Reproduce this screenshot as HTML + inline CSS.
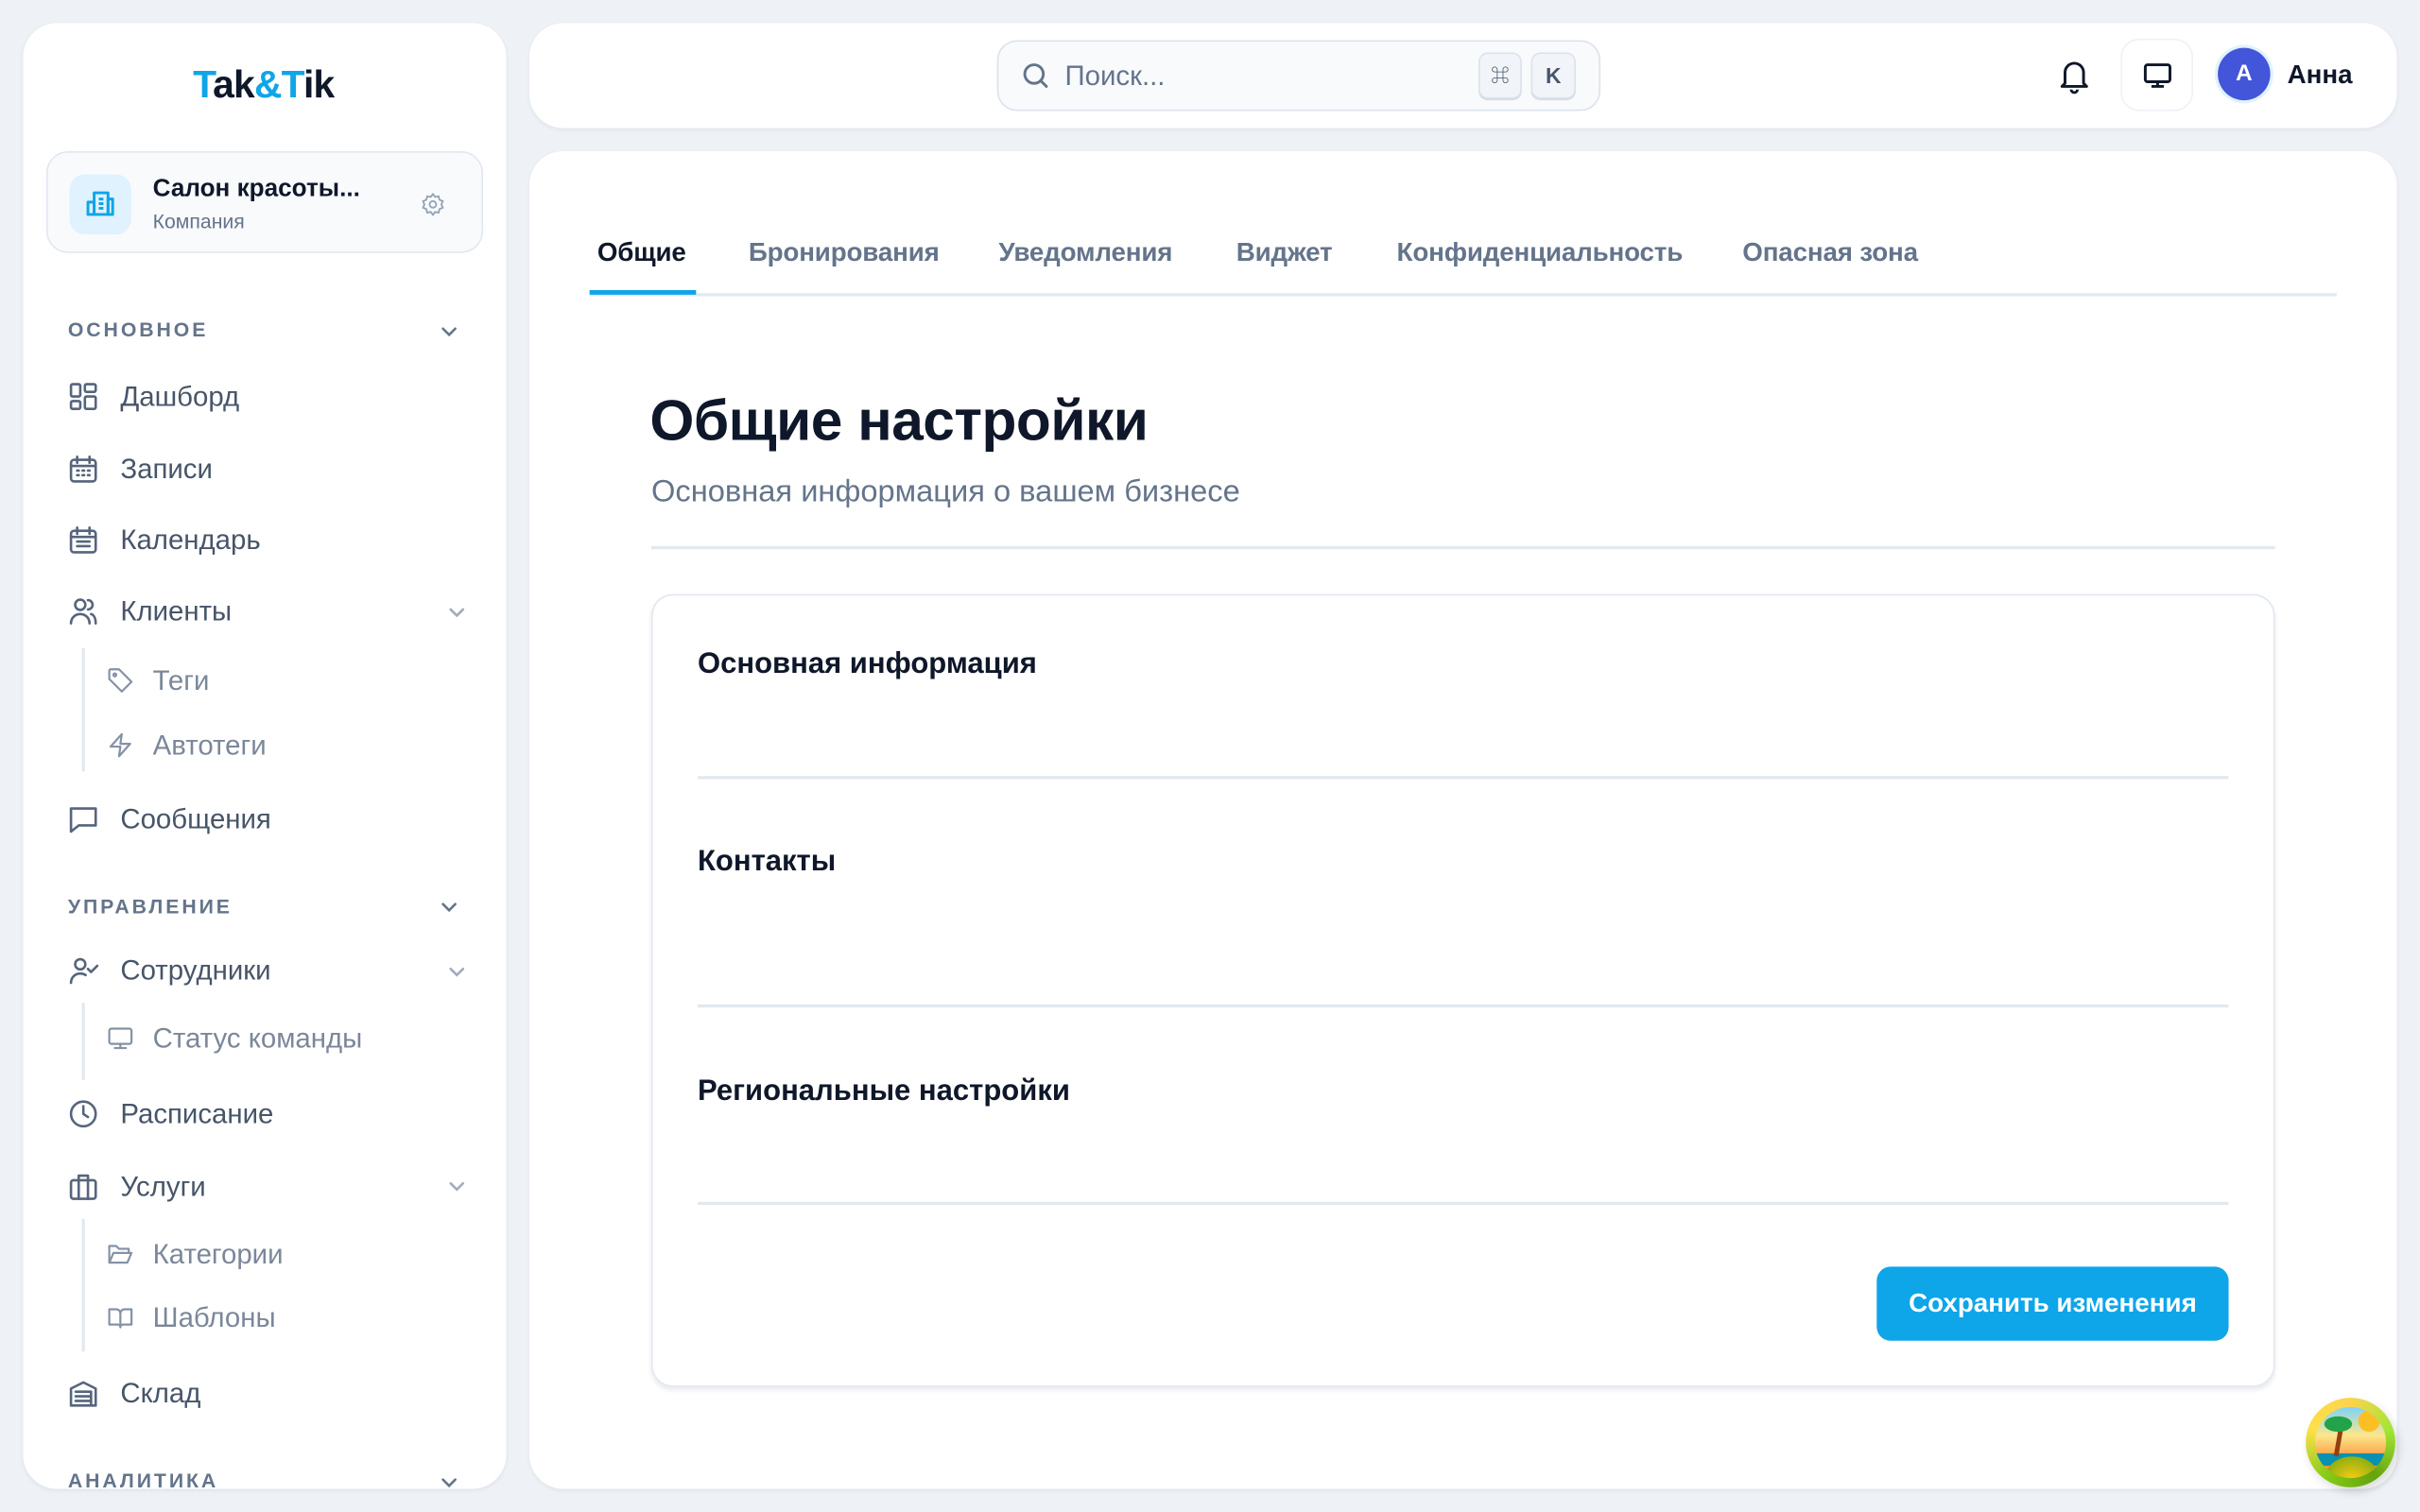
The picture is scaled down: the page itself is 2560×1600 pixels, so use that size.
<!DOCTYPE html>
<html><head><meta charset="utf-8">
<style>
*{box-sizing:border-box;margin:0;padding:0}
html,body{width:2560px;height:1600px;overflow:hidden;background:#eef2f7}
#w{position:absolute;left:0;top:0;width:1568px;height:980px;transform:scale(1.632653);transform-origin:0 0;font-family:"Liberation Sans","Noto Sans CJK SC",sans-serif;color:#0f172a}
.a{position:absolute;white-space:nowrap}
.panel{position:absolute;background:#fff;border-radius:22px;box-shadow:0 1px 3px rgba(15,23,42,.06)}
.sec{font-size:13px;font-weight:bold;letter-spacing:1.8px;color:#64748b;line-height:16px}
.it{font-size:18px;color:#475569;line-height:20px}
.sub{font-size:18px;color:#7b879a;line-height:20px}
.ic{position:absolute;width:20px;height:20px;fill:none;stroke:#56657c;stroke-width:1.6;stroke-linecap:round;stroke-linejoin:round}
.ics{position:absolute;width:18px;height:18px;fill:none;stroke:#8592a6;stroke-width:1.5;stroke-linecap:round;stroke-linejoin:round}
.chev{position:absolute;width:12px;height:12px;fill:none;stroke:#64748b;stroke-width:1.6;stroke-linecap:round}
.vl{position:absolute;left:53px;width:1.5px;background:#e2e8f0}
.tab{font-size:17px;color:#64748b;line-height:20px;font-weight:bold;letter-spacing:-.1px}
.h3{font-size:19px;font-weight:bold;line-height:22px;color:#0f172a}
.hl{position:absolute;left:452px;width:992px;height:1.5px;background:#e2e8f0}
</style></head><body><div id="w">

<div class="panel" style="left:15px;top:15px;width:313px;height:950px"></div>
<div class="a" style="left:125px;top:41px;font-size:25px;font-weight:bold;letter-spacing:-.5px;line-height:28px"><span style="color:#0ea5e9">T</span><span style="color:#0f172a">ak</span><span style="color:#0ea5e9">&amp;T</span><span style="color:#0f172a">ik</span></div>

<div class="a" style="left:30px;top:98px;width:283px;height:66px;border:1.5px solid #e2e8f0;background:#f8fafc;border-radius:14px"></div>
<div class="a" style="left:45px;top:113px;width:40px;height:39px;background:#e0f2fe;border-radius:10px"></div>
<svg class="a" style="left:55px;top:122px" width="20" height="20" viewBox="0 0 20 20" fill="none" stroke="#0ea5e9" stroke-width="1.8" stroke-linejoin="round"><rect x="6" y="3" width="9" height="14"/><rect x="2" y="9" width="4" height="8"/><rect x="15" y="7" width="3" height="10"/><path d="M9 7h3M9 10h3M9 13h3"/></svg>
<div class="a" style="left:99px;top:113px;font-size:16px;font-weight:bold;line-height:19px">Салон красоты...</div>
<div class="a" style="left:99px;top:136px;font-size:13px;color:#64748b;line-height:15px">Компания</div>
<svg class="a" style="left:272px;top:124px" width="17" height="17" viewBox="0 0 24 24" fill="none" stroke="#94a3b8" stroke-width="1.6"><circle cx="12" cy="12" r="3"/><path d="M12 2.5l2 2.6 3.2-.6.8 3.2 3 1.3-1.2 3 1.2 3-3 1.3-.8 3.2-3.2-.6-2 2.6-2-2.6-3.2.6-.8-3.2-3-1.3 1.2-3-1.2-3 3-1.3.8-3.2 3.2.6z"/></svg>

<div class="a sec" style="left:44px;top:206px">ОСНОВНОЕ</div>
<svg class="chev" style="left:285px;top:209px" viewBox="0 0 12 12"><path d="M2 4l4 4 4-4"/></svg>

<svg class="ic" style="left:44px;top:247px" viewBox="0 0 20 20"><rect x="2" y="2" width="6" height="8" rx="1"/><rect x="11" y="2" width="7" height="5" rx="1"/><rect x="2" y="13" width="6" height="5" rx="1"/><rect x="11" y="10" width="7" height="8" rx="1"/></svg>
<div class="a it" style="left:78px;top:247px">Дашборд</div>
<svg class="ic" style="left:44px;top:294px" viewBox="0 0 20 20"><rect x="2" y="4" width="16" height="14" rx="2"/><path d="M2 8h16M6 2v4M14 2v4M6 11h1M9.5 11h1M13 11h1M6 14h1M9.5 14h1M13 14h1"/></svg>
<div class="a it" style="left:78px;top:294px">Записи</div>
<svg class="ic" style="left:44px;top:340px" viewBox="0 0 20 20"><rect x="2" y="4" width="16" height="14" rx="2"/><path d="M2 8h16M6 2v4M14 2v4M6 11h8M6 14h8"/></svg>
<div class="a it" style="left:78px;top:340px">Календарь</div>
<svg class="ic" style="left:44px;top:386px" viewBox="0 0 20 20"><circle cx="8" cy="6" r="3.3"/><path d="M2 18c0-3.5 2.7-6 6-6s6 2.5 6 6M13 3a3 3 0 010 6M15 12c2 .6 3 3 3 6"/></svg>
<div class="a it" style="left:78px;top:386px">Клиенты</div>
<svg class="chev" style="left:290px;top:391px;stroke:#a0acbd" viewBox="0 0 12 12"><path d="M2 4l4 4 4-4"/></svg>
<div class="vl" style="top:420px;height:80px"></div>
<svg class="ics" style="left:69px;top:432px" viewBox="0 0 20 20"><path d="M2 9V3a1 1 0 011-1h6l9 9-7 7z"/><circle cx="6" cy="6" r="1"/></svg>
<div class="a sub" style="left:99px;top:431px">Теги</div>
<svg class="ics" style="left:69px;top:474px" viewBox="0 0 20 20"><path d="M11 2L3 11h7l-1 7 8-9h-7z"/></svg>
<div class="a sub" style="left:99px;top:473px">Автотеги</div>
<svg class="ic" style="left:44px;top:521px" viewBox="0 0 20 20"><path d="M2 3h16v11H7l-5 4z"/></svg>
<div class="a it" style="left:78px;top:521px">Сообщения</div>

<div class="a sec" style="left:44px;top:580px">УПРАВЛЕНИЕ</div>
<svg class="chev" style="left:285px;top:582px" viewBox="0 0 12 12"><path d="M2 4l4 4 4-4"/></svg>
<svg class="ic" style="left:44px;top:619px" viewBox="0 0 20 20"><circle cx="8" cy="6" r="3.3"/><path d="M2 18c0-3.5 2.7-6 6-6 1.5 0 2.6.4 3.5 1M13 9l2 2 4-4"/></svg>
<div class="a it" style="left:78px;top:619px">Сотрудники</div>
<svg class="chev" style="left:290px;top:624px;stroke:#a0acbd" viewBox="0 0 12 12"><path d="M2 4l4 4 4-4"/></svg>
<div class="vl" style="top:650px;height:50px"></div>
<svg class="ics" style="left:69px;top:664px" viewBox="0 0 20 20"><rect x="2" y="3" width="16" height="11" rx="1.5"/><path d="M10 14v3M6 17h8"/></svg>
<div class="a sub" style="left:99px;top:663px">Статус команды</div>
<svg class="ic" style="left:44px;top:712px" viewBox="0 0 20 20"><circle cx="10" cy="10" r="8"/><path d="M10 5v5l3 2"/></svg>
<div class="a it" style="left:78px;top:712px">Расписание</div>
<svg class="ic" style="left:44px;top:759px" viewBox="0 0 20 20"><rect x="2" y="6" width="16" height="12" rx="1.5"/><path d="M7 6V3h6v3M7 6v12M13 6v12"/></svg>
<div class="a it" style="left:78px;top:759px">Услуги</div>
<svg class="chev" style="left:290px;top:763px;stroke:#a0acbd" viewBox="0 0 12 12"><path d="M2 4l4 4 4-4"/></svg>
<div class="vl" style="top:790px;height:86px"></div>
<svg class="ics" style="left:69px;top:804px" viewBox="0 0 20 20"><path d="M2 16V4h5l2 2h7v3M2 16l3-7h13l-3 7z"/></svg>
<div class="a sub" style="left:99px;top:803px">Категории</div>
<svg class="ics" style="left:69px;top:845px" viewBox="0 0 20 20"><path d="M2 4h5a3 3 0 013 3v10a2 2 0 00-2-2H2zM18 4h-5a3 3 0 00-3 3v10a2 2 0 012-2h6z"/></svg>
<div class="a sub" style="left:99px;top:844px">Шаблоны</div>
<svg class="ic" style="left:44px;top:893px" viewBox="0 0 20 20"><path d="M2 18V7l8-4 8 4v11zM5 9h10v9M5 12h10M5 15h10"/></svg>
<div class="a it" style="left:78px;top:893px">Склад</div>
<div style="position:absolute;left:15px;top:940px;width:313px;height:25px;overflow:hidden;border-radius:0 0 22px 22px">
<div class="a sec" style="left:29px;top:12px">АНАЛИТИКА</div>
<svg class="chev" style="left:270px;top:15px" viewBox="0 0 12 12"><path d="M2 4l4 4 4-4"/></svg></div>

<div class="panel" style="left:343px;top:15px;width:1210px;height:68px"></div>
<div class="a" style="left:646px;top:26px;width:391px;height:46px;border:1.5px solid #dde3ec;background:#f8fafc;border-radius:13px"></div>
<svg class="a" style="left:661px;top:39px" width="20" height="20" viewBox="0 0 20 20" fill="none" stroke="#64748b" stroke-width="1.8" stroke-linecap="round"><circle cx="9" cy="9" r="6"/><path d="M13.5 13.5L17 17"/></svg>
<div class="a" style="left:690px;top:38px;font-size:18px;color:#64748b;line-height:22px">Поиск...</div>
<div class="a" style="left:958px;top:34px;width:28px;height:30px;border:1px solid #dde3ec;background:#f1f5f9;border-radius:6px;font-size:12px;color:#475569;text-align:center;line-height:28px;box-shadow:0 1px 0 #d5dbe4">⌘</div>
<div class="a" style="left:992px;top:34px;width:29px;height:30px;border:1px solid #dde3ec;background:#f1f5f9;border-radius:6px;font-size:14px;font-weight:bold;color:#475569;text-align:center;line-height:28px;box-shadow:0 1px 0 #d5dbe4">K</div>
<svg class="a" style="left:1333px;top:37px" width="22" height="24" viewBox="0 0 22 24" fill="none" stroke="#0f172a" stroke-width="1.8" stroke-linejoin="round"><path d="M5 17V10a6 6 0 0112 0v7l2 2H3z"/><path d="M9 21a2 2 0 004 0"/></svg>
<div class="a" style="left:1374px;top:25px;width:47px;height:47px;border:1px solid #eef2f7;border-radius:12px"></div>
<svg class="a" style="left:1388px;top:39px" width="20" height="20" viewBox="0 0 20 20" fill="none" stroke="#0f172a" stroke-width="1.8"><rect x="2" y="3" width="16" height="11" rx="1.5"/><path d="M10 14v3M6 17h8"/></svg>
<div class="a" style="left:1435px;top:29px;width:38px;height:38px;border-radius:50%;background:#e0f2fe"></div>
<div class="a" style="left:1437px;top:31px;width:34px;height:34px;border-radius:50%;background:#4355d9;color:#fff;font-size:15px;font-weight:bold;text-align:center;line-height:34px">A</div>
<div class="a" style="left:1482px;top:38px;font-size:17px;font-weight:bold;line-height:21px">Анна</div>

<div class="panel" style="left:343px;top:98px;width:1210px;height:867px"></div>
<div class="a tab" style="left:387px;top:154px;color:#0f172a">Общие</div>
<div class="a tab" style="left:485px;top:154px">Бронирования</div>
<div class="a tab" style="left:647px;top:154px">Уведомления</div>
<div class="a tab" style="left:801px;top:154px">Виджет</div>
<div class="a tab" style="left:905px;top:154px">Конфиденциальность</div>
<div class="a tab" style="left:1129px;top:154px">Опасная зона</div>
<div class="a" style="left:382px;top:190px;width:1132px;height:1.5px;background:#e2e8f0"></div>
<div class="a" style="left:382px;top:188px;width:69px;height:3px;background:#0ea5e9"></div>

<div class="a" style="left:421px;top:252px;font-size:37px;font-weight:bold;letter-spacing:-.3px;line-height:42px">Общие настройки</div>
<div class="a" style="left:422px;top:308px;font-size:20px;color:#64748b;line-height:22px">Основная информация о вашем бизнесе</div>
<div class="a" style="left:422px;top:354px;width:1052px;height:1.5px;background:#e2e8f0"></div>

<div class="a" style="left:422px;top:385px;width:1052px;height:514px;border:1.5px solid #e2e8f0;border-radius:14px;box-shadow:0 2px 3px rgba(15,23,42,.08)"></div>
<div class="a h3" style="left:452px;top:420px">Основная информация</div>
<div class="hl" style="top:503px"></div>
<div class="a h3" style="left:452px;top:548px">Контакты</div>
<div class="hl" style="top:651px"></div>
<div class="a h3" style="left:452px;top:697px">Региональные настройки</div>
<div class="hl" style="top:779px"></div>
<div class="a" style="left:1216px;top:821px;width:228px;height:48px;background:#0ea5e9;border-radius:9px;color:#fff;font-size:17px;font-weight:bold;text-align:center;line-height:48px">Сохранить изменения</div>

<div class="a" style="left:1494px;top:906px;width:58px;height:58px;border-radius:50%;background:conic-gradient(#fcd34d,#a3e635,#65a30d,#84cc16,#fde047,#fcd34d);box-shadow:2px 3px 6px rgba(0,0,0,.15)"></div>
<div class="a" style="left:1500px;top:912px;width:46px;height:46px;border-radius:50%;overflow:hidden;background:linear-gradient(#7dd3fc,#fde68a 40%,#fb923c 75%)">
<div class="a" style="left:28px;top:2px;width:14px;height:14px;border-radius:50%;background:#fbbf24"></div>
<div class="a" style="left:0;top:30px;width:46px;height:8px;background:#0891b2"></div>
<div class="a" style="left:6px;top:32px;width:36px;height:30px;border-radius:50%;background:radial-gradient(#facc15,#65a30d)"></div>
<div class="a" style="left:14px;top:10px;width:3px;height:22px;background:#92400e;transform:rotate(10deg)"></div>
<div class="a" style="left:6px;top:6px;width:18px;height:10px;border-radius:50%;background:#22a34a"></div>
</div>

</div></body></html>
